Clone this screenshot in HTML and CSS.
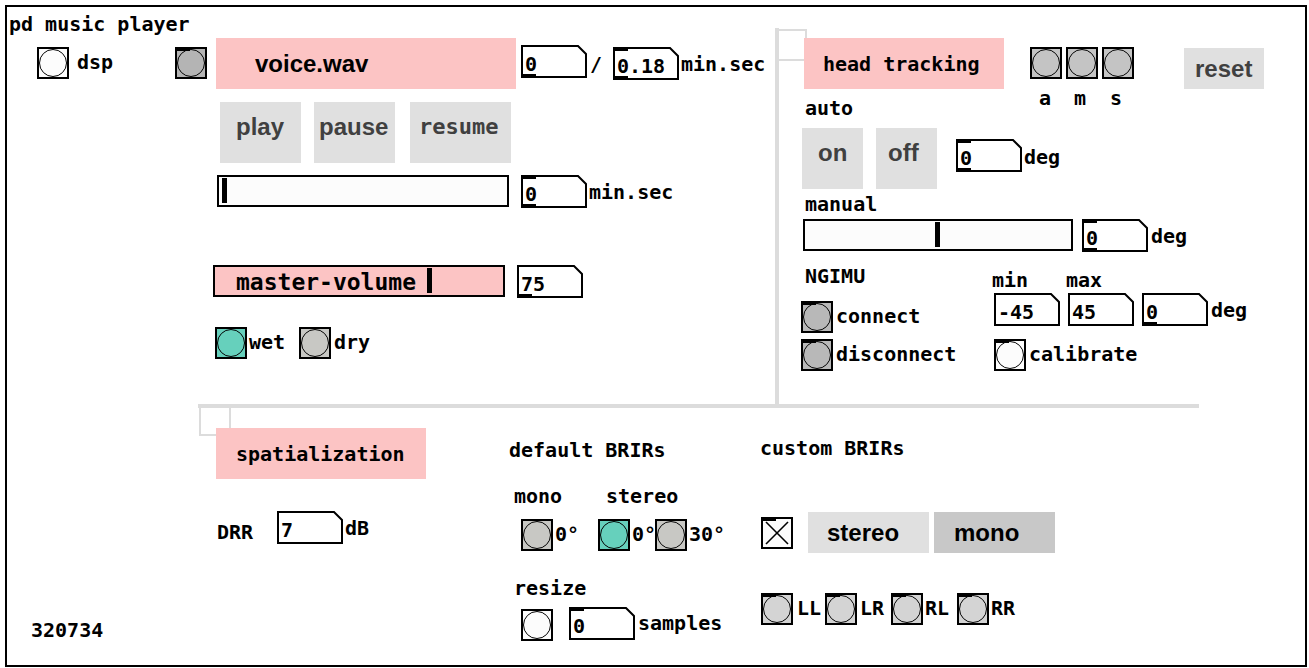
FILE: index.html
```html
<!DOCTYPE html>
<html>
<head>
<meta charset="utf-8">
<title>pd music player</title>
<link rel="stylesheet" href="styles.css">
</head>
<body>
<div class="patch">
  <!-- separators -->
  <div class="vline"></div>
  <div class="hline"></div>
  <div class="selbox sel-top"></div>
  <div class="selbox sel-bot"></div>

  <!-- player -->
  <span class="lbl l-title">pd music player</span>
  <div class="bng b-dsp"></div>
  <span class="lbl l-dsp">dsp</span>
  <div class="bng gray1 in b-voice"></div>
  <div class="cnv c-voice"><span class="sans">voice.wav</span></div>
  <div class="nbx n1"><svg viewBox="0 0 66 33"><polygon points="1,1 57,1 65,9 65,32 1,32"/></svg><span class="v">0</span><i class="out"></i></div>
  <span class="lbl l-slash">/</span>
  <div class="nbx n2"><svg viewBox="0 0 66 33"><polygon points="1,1 57,1 65,9 65,32 1,32"/></svg><span class="v">0.18</span><i class="inl"></i><i class="out"></i></div>
  <span class="lbl l-ms1">min.sec</span>

  <div class="btn b-play">play</div>
  <div class="btn b-pause">pause</div>
  <div class="btn mono-btn b-resume">resume</div>

  <div class="hsl s1"><i class="knob"></i></div>
  <div class="nbx n3"><svg viewBox="0 0 66 33"><polygon points="1,1 57,1 65,9 65,32 1,32"/></svg><span class="v">0</span><i class="inl"></i><i class="out"></i></div>
  <span class="lbl l-ms2">min.sec</span>

  <div class="hsl pink s3"><span class="vol">master-volume</span><i class="knob"></i></div>
  <div class="nbx n9"><svg viewBox="0 0 66 33"><polygon points="1,1 57,1 65,9 65,32 1,32"/></svg><span class="v">75</span><i class="out"></i></div>

  <div class="bng teal b-wet"></div>
  <span class="lbl l-wet">wet</span>
  <div class="bng gray4 b-dry"></div>
  <span class="lbl l-dry">dry</span>

  <!-- head tracking -->
  <div class="cnv c-head"><span class="ctext">head tracking</span></div>
  <div class="bng gray2 b-a"></div>
  <div class="bng gray2 b-m"></div>
  <div class="bng gray2 b-s"></div>
  <span class="lbl l-a">a</span>
  <span class="lbl l-m">m</span>
  <span class="lbl l-s">s</span>
  <div class="btn b-reset">reset</div>

  <span class="lbl l-auto">auto</span>
  <div class="btn b-on">on</div>
  <div class="btn b-off">off</div>
  <div class="nbx n4"><svg viewBox="0 0 66 33"><polygon points="1,1 57,1 65,9 65,32 1,32"/></svg><span class="v">0</span><i class="inl"></i><i class="out"></i></div>
  <span class="lbl l-deg1">deg</span>

  <span class="lbl l-manual">manual</span>
  <div class="hsl s2"><i class="knob"></i></div>
  <div class="nbx n5"><svg viewBox="0 0 66 33"><polygon points="1,1 57,1 65,9 65,32 1,32"/></svg><span class="v">0</span><i class="inl"></i><i class="out"></i></div>
  <span class="lbl l-deg2">deg</span>

  <span class="lbl l-ngimu">NGIMU</span>
  <span class="lbl l-min">min</span>
  <span class="lbl l-max">max</span>
  <div class="bng gray3 in b-conn"></div>
  <span class="lbl l-conn">connect</span>
  <div class="bng gray3 in b-disc"></div>
  <span class="lbl l-disc">disconnect</span>
  <div class="nbx n6"><svg viewBox="0 0 66 33"><polygon points="1,1 57,1 65,9 65,32 1,32"/></svg><span class="v">-45</span></div>
  <div class="nbx n7"><svg viewBox="0 0 66 33"><polygon points="1,1 57,1 65,9 65,32 1,32"/></svg><span class="v">45</span></div>
  <div class="nbx n8"><svg viewBox="0 0 66 33"><polygon points="1,1 57,1 65,9 65,32 1,32"/></svg><span class="v">0</span><i class="out"></i></div>
  <span class="lbl l-deg3">deg</span>
  <div class="bng in b-cal"></div>
  <span class="lbl l-cal">calibrate</span>

  <!-- spatialization -->
  <div class="cnv c-spat"><span class="ctext">spatialization</span></div>
  <span class="lbl l-drr">DRR</span>
  <div class="nbx n10"><svg viewBox="0 0 66 33"><polygon points="1,1 57,1 65,9 65,32 1,32"/></svg><span class="v">7</span></div>
  <span class="lbl l-db">dB</span>

  <span class="lbl l-def">default BRIRs</span>
  <span class="lbl l-monol">mono</span>
  <span class="lbl l-stereol">stereo</span>
  <div class="bng gray4 b-m0"></div>
  <span class="lbl l-d1">0°</span>
  <div class="bng teal b-s0"></div>
  <span class="lbl l-d2">0°</span>
  <div class="bng gray4 b-s30"></div>
  <span class="lbl l-d3">30°</span>

  <span class="lbl l-resize">resize</span>
  <div class="bng b-resize"></div>
  <div class="nbx n11"><svg viewBox="0 0 66 33"><polygon points="1,1 57,1 65,9 65,32 1,32"/></svg><span class="v">0</span><i class="inl"></i></div>
  <span class="lbl l-samples">samples</span>

  <span class="lbl l-custom">custom BRIRs</span>
  <div class="tgl"><svg viewBox="0 0 28 28"><line x1="3" y1="3" x2="25" y2="25"/><line x1="25" y1="3" x2="3" y2="25"/></svg><i class="inl"></i></div>
  <div class="btn dark b-stereo">stereo</div>
  <div class="btn dark b-mono">mono</div>

  <div class="bng gray5 in b-ll"></div>
  <span class="lbl l-ll">LL</span>
  <div class="bng gray5 in b-lr"></div>
  <span class="lbl l-lr">LR</span>
  <div class="bng gray5 in b-rl"></div>
  <span class="lbl l-rl">RL</span>
  <div class="bng gray5 in b-rr"></div>
  <span class="lbl l-rr">RR</span>

  <span class="lbl l-id">320734</span>
</div>
</body>
</html>
```

FILE: styles.css
```css
* { box-sizing: border-box; }

body {
  margin: 0;
  background: #fff;
}

.patch {
  position: relative;
  margin: 5px;
  width: 1302px;
  height: 662px;
  border: 2px solid #000;
  font-family: "DejaVu Sans Mono", monospace;
  font-weight: bold;
  font-size: 20px;
  line-height: 20px;
  color: #000;
  overflow: hidden;
}

/* separators */
.vline { position: absolute; left: 768px; top: 21px; width: 4px; height: 380px; background: #dcdcdc; }
.hline { position: absolute; left: 191px; top: 397px; width: 1001px; height: 4px; background: #dcdcdc; }
.selbox { position: absolute; width: 32px; height: 32px; border: 2px solid #dcdcdc; }
.sel-top { left: 768px; top: 22px; }
.sel-bot { left: 192px; top: 397px; }

/* labels */
.lbl { position: absolute; white-space: pre; }
.l-title { left: 2px; top: 7px; }
.l-dsp { left: 70px; top: 45px; }
.l-slash { left: 583px; top: 47px; }
.l-ms1 { left: 674px; top: 47px; }
.l-ms2 { left: 582px; top: 175px; }
.l-wet { left: 242px; top: 325px; }
.l-dry { left: 327px; top: 325px; }
.l-auto { left: 798px; top: 91px; }
.l-a { left: 1032px; top: 81px; }
.l-m { left: 1067px; top: 81px; }
.l-s { left: 1103px; top: 81px; }
.l-deg1 { left: 1017px; top: 140px; }
.l-manual { left: 798px; top: 187px; }
.l-deg2 { left: 1144px; top: 219px; }
.l-ngimu { left: 798px; top: 259px; }
.l-min { left: 985px; top: 263px; }
.l-max { left: 1059px; top: 263px; }
.l-deg3 { left: 1204px; top: 293px; }
.l-conn { left: 829px; top: 299px; }
.l-disc { left: 829px; top: 337px; }
.l-cal { left: 1022px; top: 337px; }
.l-drr { left: 210px; top: 515px; }
.l-db { left: 338px; top: 511px; }
.l-def { left: 502px; top: 433px; }
.l-custom { left: 753px; top: 431px; }
.l-monol { left: 507px; top: 479px; }
.l-stereol { left: 599px; top: 479px; }
.l-d1 { left: 548px; top: 517px; }
.l-d2 { left: 625px; top: 517px; }
.l-d3 { left: 682px; top: 517px; }
.l-resize { left: 507px; top: 571px; }
.l-samples { left: 631px; top: 606px; }
.l-ll { left: 790px; top: 591px; }
.l-lr { left: 853px; top: 591px; }
.l-rl { left: 918px; top: 591px; }
.l-rr { left: 984px; top: 591px; }
.l-id { left: 24px; top: 613px; }

/* bangs */
.bng {
  position: absolute;
  width: 32px;
  height: 32px;
  border: 2px solid #000;
  background: #fcfcfc;
}
.bng::before {
  content: "";
  position: absolute;
  inset: 0;
  border: 1.6px solid #000;
  border-radius: 50%;
}
.bng.in::after {
  content: "";
  position: absolute;
  left: -2px;
  top: -2px;
  width: 15px;
  height: 4px;
  background: #000;
}
.gray1 { background: #b4b4b4; }
.gray2 { background: #c4c4c4; }
.gray3 { background: #b8b8b8; }
.gray4 { background: #c8c8c4; }
.gray5 { background: #d4d4d4; }
.teal { background: #66d0bc; }

.b-dsp { left: 30px; top: 40px; }
.b-voice { left: 168px; top: 40px; }
.b-wet { left: 208px; top: 320px; }
.b-dry { left: 292px; top: 320px; }
.b-a { left: 1023px; top: 40px; }
.b-m { left: 1059px; top: 40px; }
.b-s { left: 1095px; top: 40px; }
.b-conn { left: 794px; top: 294px; }
.b-disc { left: 794px; top: 332px; }
.b-cal { left: 987px; top: 332px; }
.b-m0 { left: 514px; top: 512px; }
.b-s0 { left: 591px; top: 512px; }
.b-s30 { left: 648px; top: 512px; }
.b-resize { left: 514px; top: 602px; }
.b-ll { left: 754px; top: 586px; }
.b-lr { left: 818px; top: 586px; }
.b-rl { left: 884px; top: 586px; }
.b-rr { left: 950px; top: 586px; }

/* number boxes */
.nbx { position: absolute; width: 66px; height: 33px; }
.nbx svg { position: absolute; left: 0; top: 0; width: 66px; height: 33px; }
.nbx polygon { fill: #fff; stroke: #000; stroke-width: 2; }
.nbx .v { position: absolute; left: 4px; top: 9px; }
.nbx .inl, .nbx .out, .tgl .inl { position: absolute; left: 0; width: 15px; height: 4px; background: #000; }
.nbx .inl, .tgl .inl { top: 0; }
.nbx .out { bottom: 0; }
.n1 { left: 514px; top: 38px; }
.n2 { left: 606px; top: 40px; }
.n3 { left: 514px; top: 168px; }
.n4 { left: 949px; top: 132px; }
.n5 { left: 1075px; top: 212px; }
.n6 { left: 987px; top: 286px; }
.n7 { left: 1061px; top: 286px; }
.n8 { left: 1135px; top: 286px; }
.n9 { left: 510px; top: 258px; }
.n10 { left: 270px; top: 504px; }
.n11 { left: 562px; top: 600px; }

/* toggle */
.tgl {
  position: absolute;
  left: 754px;
  top: 510px;
  width: 32px;
  height: 32px;
  border: 2px solid #000;
  background: #fcfcfc;
}
.tgl .inl { left: -2px; top: -2px; }
.tgl svg { display: block; width: 28px; height: 28px; }
.tgl line { stroke: #000; stroke-width: 1.6; }

/* sliders */
.hsl {
  position: absolute;
  height: 32px;
  border: 2px solid #000;
  background: #fcfcfc;
}
.hsl.pink { background: #fcc4c4; }
.hsl .knob { position: absolute; top: 1px; width: 5px; height: 25px; background: #000; }
.s1 { left: 210px; top: 168px; width: 292px; }
.s1 .knob { left: 3px; }
.s2 { left: 796px; top: 212px; width: 270px; }
.s2 .knob { left: 130px; }
.s3 { left: 206px; top: 258px; width: 292px; }
.s3 .knob { left: 212px; }
.vol {
  position: absolute;
  left: 21px;
  top: 4px;
  font-size: 23px;
  line-height: 23px;
  white-space: pre;
}

/* pink canvases */
.cnv { position: absolute; height: 51px; background: #fcc4c4; }
.c-voice { left: 209px; top: 31px; width: 300px; padding: 14px 0 0 39px; }
.c-head { left: 797px; top: 31px; width: 200px; padding: 16px 0 0 19px; }
.c-spat { left: 209px; top: 421px; width: 210px; padding: 16px 0 0 20px; }
.ctext { white-space: pre; }
.sans {
  font-family: "Liberation Sans", Arial, sans-serif;
  font-size: 24px;
  line-height: 24px;
}

/* buttons */
.btn {
  position: absolute;
  background: #e0e0e0;
  color: #404040;
  font-family: "Liberation Sans", Arial, sans-serif;
  font-size: 24px;
  line-height: 24px;
  white-space: pre;
}
.btn.mono-btn {
  font-family: "DejaVu Sans Mono", monospace;
  font-size: 22px;
  line-height: 22px;
}
.btn.dark { color: #000; }
.b-play { left: 213px; top: 95px; width: 81px; height: 61px; padding: 13px 0 0 16px; }
.b-pause { left: 307px; top: 95px; width: 81px; height: 61px; padding: 13px 0 0 5px; }
.b-resume { left: 403px; top: 95px; width: 101px; height: 61px; padding: 14px 0 0 9px; }
.b-reset { left: 1177px; top: 41px; width: 80px; height: 41px; padding: 9px 0 0 11px; }
.b-on { left: 795px; top: 121px; width: 61px; height: 61px; padding: 13px 0 0 16px; }
.b-off { left: 869px; top: 121px; width: 61px; height: 61px; padding: 13px 0 0 12px; }
.b-stereo { left: 801px; top: 505px; width: 121px; height: 41px; padding: 9px 0 0 19px; }
.b-mono { left: 927px; top: 505px; width: 121px; height: 41px; padding: 9px 0 0 20px; background: #c8c8c8; }
```
